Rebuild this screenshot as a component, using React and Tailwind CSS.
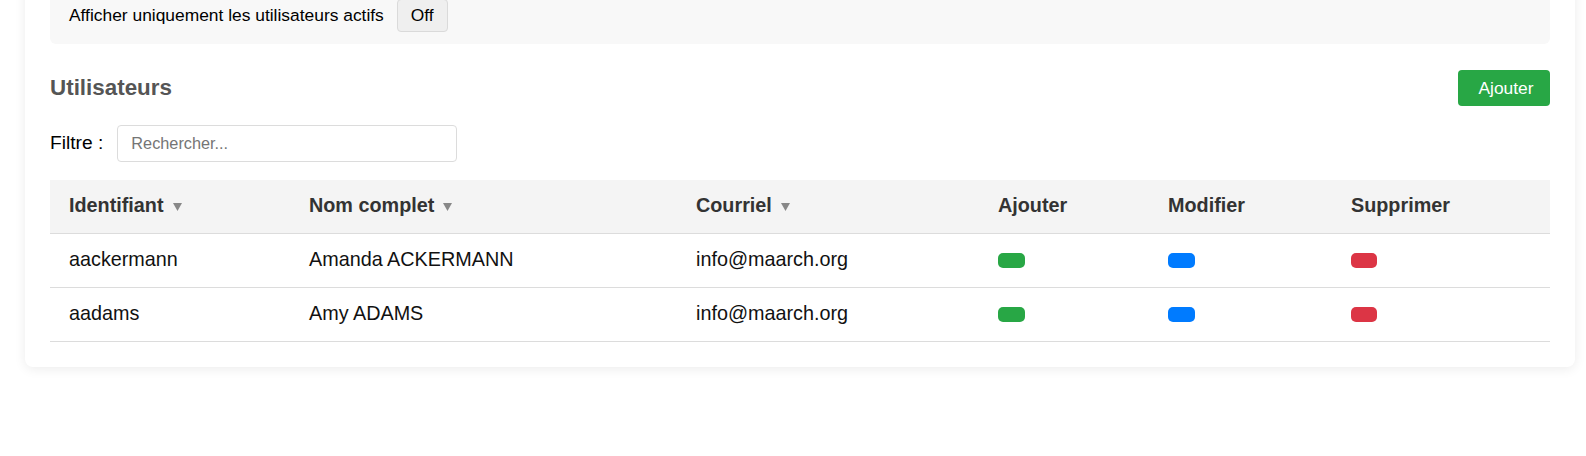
const users = [
  { login: 'aackermann', name: 'Amanda ACKERMANN', email: 'info@maarch.org' },
  { login: 'aadams', name: 'Amy ADAMS', email: 'info@maarch.org' },
];

function SortArrow() {
  return (
    <svg width="9" height="8" viewBox="0 0 9 8" className="ml-[9px] inline-block">
      <polygon points="0,0 9,0 4.5,8" fill="#888" />
    </svg>
  );
}

export default function App() {
  return (
    <div className="h-[456px] overflow-hidden bg-white font-['Liberation_Sans',Arial,sans-serif]">
      <div className="ml-[25px] -mt-[38px] w-[1550px] rounded-[8px] bg-white p-[25px] shadow-[0_2px_12px_rgba(0,0,0,0.08)]">
        {/* filter on active users */}
        <div className="flex items-center rounded-[6px] bg-[#f8f8f8] px-[19px] py-[12px]">
          <span className="text-[17.4px] text-black">Afficher uniquement les utilisateurs actifs</span>
          <button className="ml-[13px] flex h-[33px] items-center rounded-[4px] border border-[#dadada] bg-[#efefef] px-[13px] text-[17.4px] text-black">
            Off
          </button>
        </div>

        <div className="mt-[26px] flex h-[36px] items-center justify-between">
          <h2 className="text-[22.4px] font-bold text-[#555]">Utilisateurs</h2>
          <button className="flex h-[36px] w-[92px] items-center justify-center rounded-[4px] bg-[#28a745] pl-[4px] text-[17.4px] text-white">
            Ajouter
          </button>
        </div>

        <div className="mt-[19px] flex items-center">
          <label className="text-[19.2px] text-black">Filtre :</label>
          <input
            placeholder="Rechercher..."
            className="ml-[14px] h-[37px] w-[340px] rounded-[4px] border border-[#dcdcdc] px-[13px] text-[16.3px] text-black outline-none placeholder:text-[#757575]"
          />
        </div>

        <table className="mt-[18px] w-full table-fixed border-collapse text-left">
          <colgroup>
            <col className="w-[240px]" />
            <col className="w-[387px]" />
            <col className="w-[302px]" />
            <col className="w-[170px]" />
            <col className="w-[183px]" />
            <col />
          </colgroup>
          <thead>
            <tr className="h-[53px] border-b border-[#dcdcdc] bg-[#f4f4f4] text-[19.8px] font-bold text-[#333]">
              <th className="pl-[19px]">Identifiant<SortArrow /></th>
              <th className="pl-[19px]">Nom complet<SortArrow /></th>
              <th className="pl-[19px]">Courriel<SortArrow /></th>
              <th className="pl-[19px]">Ajouter</th>
              <th className="pl-[19px]">Modifier</th>
              <th className="pl-[19px]">Supprimer</th>
            </tr>
          </thead>
          <tbody>
            {users.map((u) => (
              <tr key={u.login} className="h-[54px] border-b border-[#dcdcdc] text-[19.8px] text-[#111]">
                <td className="pl-[19px]">{u.login}</td>
                <td className="pl-[19px]">{u.name}</td>
                <td className="pl-[19px]">{u.email}</td>
                <td className="pl-[19px]">
                  <span className="block h-[15px] w-[27px] rounded-[5px] bg-[#28a745]" />
                </td>
                <td className="pl-[19px]">
                  <span className="block h-[15px] w-[27px] rounded-[5px] bg-[#007bff]" />
                </td>
                <td className="pl-[19px]">
                  <span className="block h-[15px] w-[26px] rounded-[5px] bg-[#dc3545]" />
                </td>
              </tr>
            ))}
          </tbody>
        </table>
      </div>
    </div>
  );
}
